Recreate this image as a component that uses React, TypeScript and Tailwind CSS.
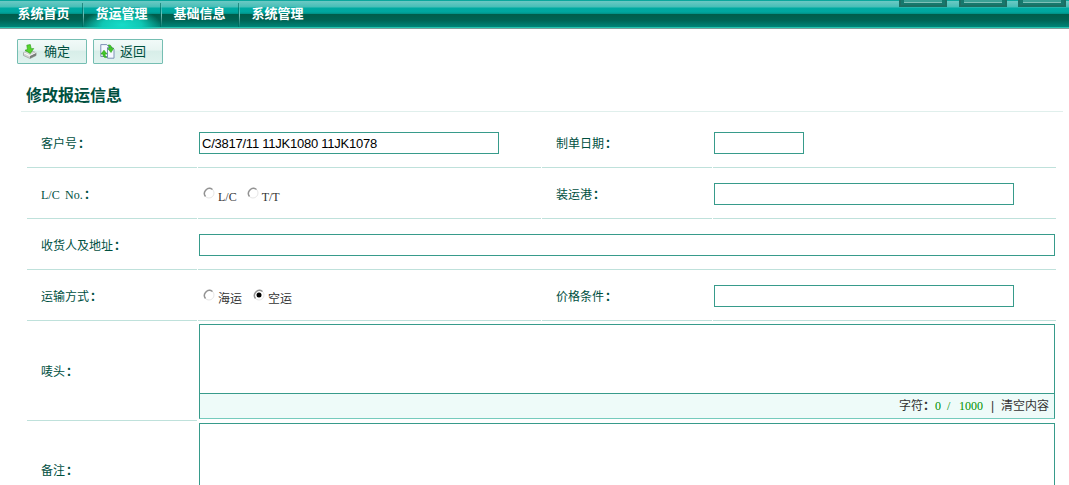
import React from "react";

const cjk = "font-['Liberation_Serif','Noto_Sans_CJK_SC',sans-serif]";
const line = "border-b border-[#bfe1db]";
const box = "border border-[#379b8b] bg-white";

function NavItem({ text, active, first, last }: { text: string; active?: boolean; first?: boolean; last?: boolean }) {
  return (
    <div className={"flex h-[29px] " + (first ? "w-[83px]" : "w-[78px]")}>
      {!first && (
        <span className="mt-[3px] h-6 w-px bg-[linear-gradient(#8fd6d000,#8fd6d0cc_50%,#8fd6d000)]" />
      )}
      <div
        className={
          "flex-1 pt-[5px] text-[13px] leading-[17px] font-bold text-white " +
          (first ? "pl-[17.500px] " : "pl-[11.500px] ") +
          (active ? "bg-[radial-gradient(ellipse_39px_17px_at_50%_25px,#16dcc8_0%,#12d4c0dd_50%,#12d4c000_100%)]" : "")
        }
      >
        {text}
      </div>
      {!last && <span className="mt-[3px] h-6 w-px bg-[#00655a99]" />}
    </div>
  );
}

function SaveIcon() {
  return (
    <svg width="14" height="15" viewBox="0 0 14 15" className="-ml-px">
      <path d="M.5 8.700 6 6.200l7 2.300v3L7 14.500.5 11.500z" fill="#d5d7d6" stroke="#969b98" strokeWidth=".7" />
      <path d="M1 8.900 6.800 11.700 13 8.700" fill="none" stroke="#fff" />
      <path d="M7 11.900 13.100 8.900v2.700L7 14.400z" fill="#777d7a" />
      <path d="M3.800 1.200 7.300.6 8.200 4.800l2.500-.3L7.300 9.500 2 6.200l2.500-.6z" fill="#55d62c" stroke="#35a322" strokeWidth=".7" />
    </svg>
  );
}

function BackIcon() {
  return (
    <svg width="15" height="15" viewBox="0 0 15 15">
      <path d="M.8.600h6L8.500 2.500v10H.8z" fill="#f5f9ff" stroke="#7d91b5" />
      <path d="M7.500 3.500h5l1.500 2v8.700H7.500z" fill="#f5f9ff" stroke="#7d91b5" />
      <path d="M8 1.200c2-.8 3.500.3 3.700 3h2L11 8.500 7.800 4.600h1.800C9.600 3 9 2 8 1.200z" fill="#43c829" stroke="#279c18" strokeWidth=".6" />
      <path d="M6.800 13.500c-2.200.5-3.800-.7-3.900-3.500H1L4 6.200 7 10H5c.1 1.800.7 2.800 1.800 3.500z" fill="#43c829" stroke="#279c18" strokeWidth=".6" />
    </svg>
  );
}

function ToolButton({ icon, text }: { icon: React.ReactNode; text: string }) {
  return (
    <button className="flex h-[25px] w-[70px] items-center rounded-[1px] border border-[#75beb2] bg-[linear-gradient(#f1faf8_0%,#e8f5f2_42%,#d8eee9_50%,#e0f3ef_100%)] pl-[6px] text-[13px] text-[#00503f]">
      <span className="w-[20px]">{icon}</span>
      <span className="leading-4">{text}</span>
    </button>
  );
}

function Label({ children, tall }: { children: React.ReactNode; tall?: boolean }) {
  return (
    <div className={"flex items-center pl-[14px] text-[12px] leading-4 text-[#00503f] " + (tall ? "pt-[2px] " : "pt-[3px] ") + line}>
      {children}
      <span className="ml-px font-bold">：</span>
    </div>
  );
}

function Field({ children, wide }: { children?: React.ReactNode; wide?: boolean }) {
  return <div className={"flex items-center pt-[2px] pl-px " + line + (wide ? " col-span-3" : "")}>{children}</div>;
}

function Radio({ label, checked }: { label: string; checked?: boolean }) {
  return (
    <span className="flex items-center">
      <svg width="12" height="12" viewBox="0 0 12 12" className="-mt-[3px]">
        <circle cx="6" cy="6" r="5" fill="#fff" stroke="#e6e6e6" />
        <path d="M2.500 9.500A5 5 0 0 1 9.500 2.500" fill="none" stroke="#929292" strokeWidth="1.400" />
        {checked && <circle cx="6" cy="6" r="2.500" fill="#000" />}
      </svg>
      <span className="ml-[3px] pt-[5px] text-[12px] leading-4 text-[#333]">{label}</span>
    </span>
  );
}

function PanelEdge() {
  return (
    <div className="h-[7px] w-12 border-x-2 border-b-2 border-[#1d6d62] bg-[#16786d] px-[3px] pb-[2px]">
      <div className="h-[3px] border-b border-[#7fbfb6] bg-[#3ca095]" />
    </div>
  );
}

export default function App() {
  return (
    <div className={"h-[485px] w-[1069px] overflow-hidden bg-white " + cjk}>
      <header className="flex h-[29px] justify-between bg-[linear-gradient(#0ba79c_0px,#0ba79c_1px,#6bc9c4_1px,#46beb7_7px,#00aaa2_8px,#00a69e_12px,#008e84_14px,#005c4a_14px,#006354_20px,#008578_27px,#24c4b0_27px,#24c4b0_28px,#7a9e99_28px,#7a9e99_29px)]">
        <nav className="flex">
          <NavItem text="系统首页" first />
          <NavItem text="货运管理" active />
          <NavItem text="基础信息" />
          <NavItem text="系统管理" last />
        </nav>
        <div className="flex gap-3 pr-[2px]">
          <PanelEdge />
          <PanelEdge />
          <div className="-ml-px pr-px"><PanelEdge /></div>
        </div>
      </header>

      <div className="flex gap-[6px] pt-[10px] pl-[17px]">
        <ToolButton icon={<SaveIcon />} text="确定" />
        <ToolButton icon={<BackIcon />} text="返回" />
      </div>

      <h1 className="mt-[20px] mr-[6px] ml-[21px] h-[28px] border-b border-[#e0efec] pl-[5px] text-[16px] leading-[24px] font-bold text-[#00503f]">修改报运信息</h1>

      <div className="mt-[5px] ml-[27px] grid w-[1029px] grid-cols-[170px_343px_170px_343px] grid-rows-[51px_51px_51px_51px_100px_99px] gap-x-px">
        <Label>客户号</Label>
        <Field>
          <div className={"h-[22px] w-[300px] pl-[2px] font-['Liberation_Sans',sans-serif] text-[13px] leading-[21px] tracking-[-0.24px] text-black " + box}>C/3817/11 11JK1080 11JK1078</div>
        </Field>
        <Label>制单日期</Label>
        <Field><div className={"h-[22px] w-[90px] " + box} /></Field>

        <Label><span className="w-6">L/C</span><span className="w-[18px]">No.</span></Label>
        <Field>
          <div className="flex gap-[10px] pl-[4px]">
            <Radio label="L/C" />
            <Radio label="T/T" />
          </div>
        </Field>
        <Label>装运港</Label>
        <Field><div className={"h-[22px] w-[300px] " + box} /></Field>

        <Label>收货人及地址</Label>
        <Field wide><div className={"h-[22px] w-[856px] " + box} /></Field>

        <Label>运输方式</Label>
        <Field>
          <div className="flex gap-[11px] pl-[4px]">
            <Radio label="海运" />
            <Radio label="空运" checked />
          </div>
        </Field>
        <Label>价格条件</Label>
        <Field><div className={"h-[22px] w-[300px] " + box} /></Field>

        <Label tall>唛头</Label>
        <div className="col-span-3 pt-[3px] pl-px">
          <div className="h-[95px] w-[856px] border border-[#379b8b] border-b-[#75cbbd]">
            <div className="h-[69px] border-b border-[#379b8b]" />
            <div className="flex h-[24px] items-center justify-end bg-[#eefbf9] pr-[5px] text-[12px] text-[#333]">
              <span className="w-6">字符</span>
              <span className="w-3 font-bold">：</span>
              <span className="w-3 text-[#009000]">0</span>
              <span className="w-3 text-[#009000]">/</span>
              <span className="w-[32px] text-[#009000]">1000</span>
              <span className="w-[10px] font-['Liberation_Sans',sans-serif]">|</span>
              <span>清空内容</span>
            </div>
          </div>
        </div>

        <Label tall>备注</Label>
        <div className="col-span-3 pt-[2px] pl-px">
          <div className={"h-[95px] w-[856px] " + box} />
        </div>
      </div>
    </div>
  );
}
